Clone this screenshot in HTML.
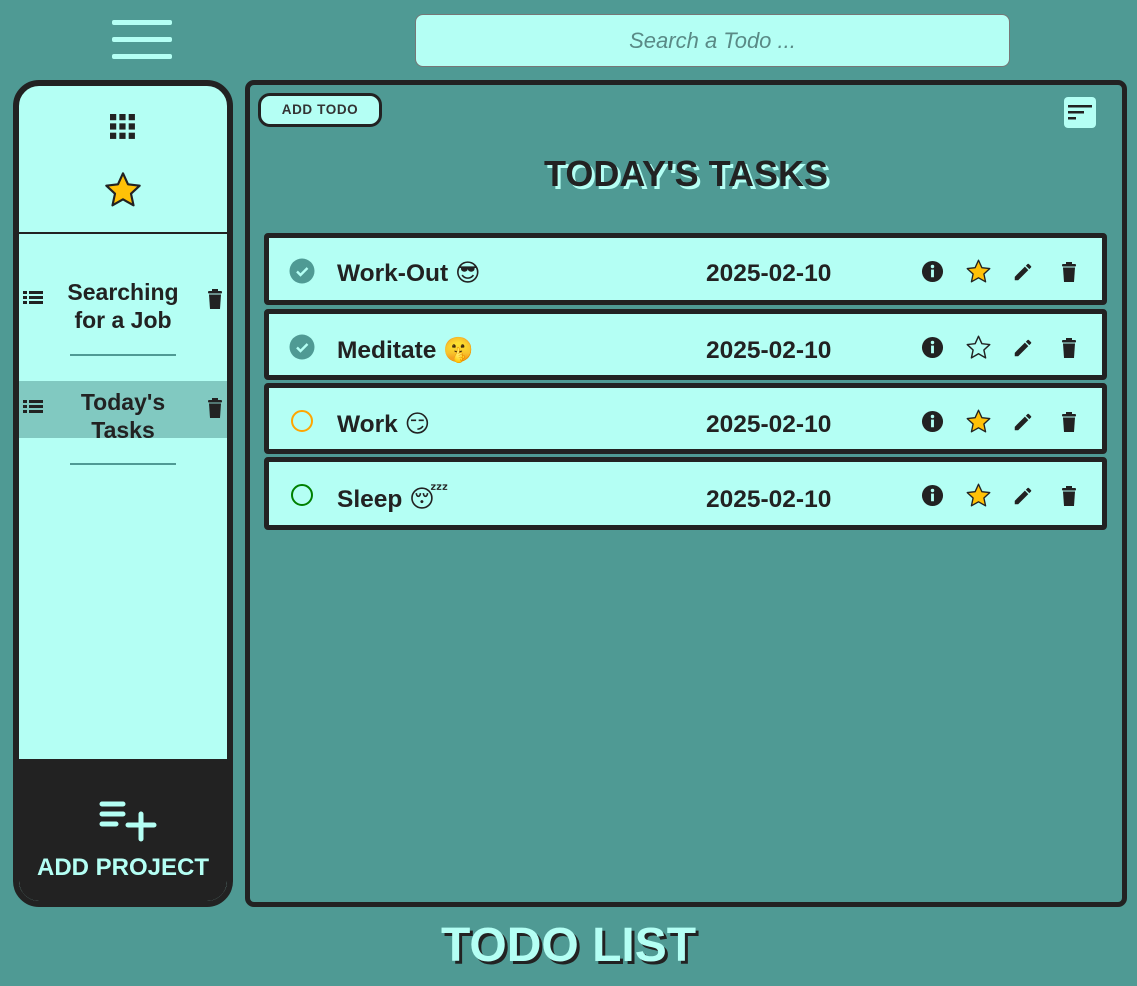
<!DOCTYPE html>
<html><head><meta charset="utf-8"><style>
*{box-sizing:border-box;margin:0;padding:0}
body{width:1137px;height:986px;background:#4f9a94;font-family:"Liberation Sans","DejaVu Sans",sans-serif;position:relative;overflow:hidden;color:#222}
.abs{position:absolute}
.ham div{position:absolute;left:112px;width:60px;height:5px;background:#b4fff4;border-radius:2px}
.search{left:415px;top:14px;width:595px;height:53px;background:#b4fff4;border:1.5px solid #777;border-radius:8px;font-style:italic;color:#5a8a86;font-size:22px;text-align:center;line-height:51px}
.side{left:13px;top:80px;width:220px;height:827px;border:6px solid #222;border-radius:26px;background:#b4fff4;overflow:hidden}
.main{left:245px;top:80px;width:882px;height:827px;border:5px solid #222;border-radius:9px}
.row{position:absolute;left:264px;width:843px;background:#b4fff4;border:5px solid #222;border-radius:4px}
.row .name{position:absolute;left:68px;font-size:24.5px;font-weight:bold}
.row .date{position:absolute;left:437px;font-size:24.5px;font-weight:bold}
.proj{position:absolute;left:0;width:208px;text-align:center;font-size:23px;font-weight:bold;line-height:28px}
</style></head><body>
<div class="ham"><div style="top:20px"></div><div style="top:37px"></div><div style="top:54px"></div></div>
<div class="abs search">Search a Todo ...</div>

<div class="abs side">
 <svg class="abs" style="left:91px;top:28px" width="27" height="27" viewBox="0 0 26 26" fill="#222">
  <rect x="0" y="0" width="6" height="6"/><rect x="9" y="0" width="6" height="6"/><rect x="18" y="0" width="6" height="6"/>
  <rect x="0" y="9" width="6" height="6"/><rect x="9" y="9" width="6" height="6"/><rect x="18" y="9" width="6" height="6"/>
  <rect x="0" y="18" width="6" height="6"/><rect x="9" y="18" width="6" height="6"/><rect x="18" y="18" width="6" height="6"/>
 </svg>
 <svg class="abs" style="left:84px;top:84px" width="40" height="40" viewBox="0 0 24 24"><path d="M12 2l3 6.6 7 .8-5.2 4.8 1.5 7L12 17.6 5.7 21.2l1.5-7L2 9.4l7-.8z" fill="#ffc107" stroke="#222" stroke-width="1.3" stroke-linejoin="round"/></svg>
 <div class="abs" style="left:0;top:146px;width:208px;height:2px;background:#222"></div>
 <svg class="abs" style="left:4px;top:204px" width="20" height="16" viewBox="0 0 20 16" fill="#222"><rect x="0" y="1" width="4" height="3"/><rect x="6" y="1" width="14" height="3"/><rect x="0" y="6" width="4" height="3"/><rect x="6" y="6" width="14" height="3"/><rect x="0" y="11" width="4" height="3"/><rect x="6" y="11" width="14" height="3"/></svg>
 <div class="proj" style="top:192px">Searching<br>for a Job</div>
 <svg class="abs" style="left:188px;top:202px" width="16" height="22" viewBox="0 0 16 22" fill="#222"><rect x="1" y="3" width="14" height="2.5" rx="1"/><rect x="5" y="1" width="6" height="3"/><path d="M2 6.5h12l-1 14.5H3z"/></svg>
 <div class="abs" style="left:51px;top:268px;width:106px;height:2px;background:#4f9a94"></div>
 <div class="abs" style="left:0;top:295px;width:208px;height:57px;background:#81c9c1"></div>
 <svg class="abs" style="left:4px;top:313px" width="20" height="16" viewBox="0 0 20 16" fill="#222"><rect x="0" y="1" width="4" height="3"/><rect x="6" y="1" width="14" height="3"/><rect x="0" y="6" width="4" height="3"/><rect x="6" y="6" width="14" height="3"/><rect x="0" y="11" width="4" height="3"/><rect x="6" y="11" width="14" height="3"/></svg>
 <div class="proj" style="top:302px">Today's<br>Tasks</div>
 <svg class="abs" style="left:188px;top:311px" width="16" height="22" viewBox="0 0 16 22" fill="#222"><rect x="1" y="3" width="14" height="2.5" rx="1"/><rect x="5" y="1" width="6" height="3"/><path d="M2 6.5h12l-1 14.5H3z"/></svg>
 <div class="abs" style="left:51px;top:377px;width:106px;height:2px;background:#4f9a94"></div>
 <div class="abs" style="left:0;top:673px;width:208px;height:150px;background:#222"></div>
 <svg class="abs" style="left:80px;top:714px" width="60" height="42" viewBox="0 0 60 42" stroke="#b4fff4" stroke-width="5" stroke-linecap="round"><path d="M3 4h21M3 14h21M3 24h14M29 25h26M42 14v25"/></svg>
 <div class="abs" style="left:0;top:768px;width:208px;text-align:center;color:#b4fff4;font-weight:bold;font-size:24px">ADD PROJECT</div>
</div>

<div class="abs main"></div>
<div class="abs" style="left:258px;top:93px;width:124px;height:34px;border:3px solid #222;border-radius:12px;background:#b4fff4;font-size:13.5px;letter-spacing:0.6px;font-weight:bold;text-align:center;line-height:28px;color:#333">ADD TODO</div>
<div class="abs" style="left:1064px;top:97px;width:32px;height:31px;background:#b4fff4;border-radius:4px">
 <svg width="32" height="31" viewBox="0 0 32 31" fill="#222"><rect x="4" y="8" width="24" height="2.5"/><rect x="4" y="14" width="16" height="2.5"/><rect x="4" y="20" width="8" height="2.5"/></svg></div>
<div class="abs" style="left:400px;top:153px;width:572px;text-align:center;font-size:36px;font-weight:bold;text-shadow:3px 3px 0 #b4fff4">TODAY'S TASKS</div>

<div class="row" style="top:233px;height:72px">
 <svg class="abs" style="left:20px;top:20px" width="26" height="26" viewBox="0 0 26 26"><circle cx="13" cy="13" r="12.5" fill="#4f9a94"/><path d="M8 13.5l3.5 3.5 7-7" stroke="#b4fff4" stroke-width="2.4" fill="none"/></svg>
 <div class="name" style="top:20px">Work-Out 😎</div><div class="date" style="top:22px">2025-02-10</div>
 <svg class="abs" style="left:652px;top:22px" width="23" height="23" viewBox="0 0 24 24"><circle cx="12" cy="12" r="11" fill="#222"/><rect x="10.5" y="10" width="3" height="8" fill="#b4fff4"/><circle cx="12" cy="6.8" r="1.8" fill="#b4fff4"/></svg>
 <svg class="abs" style="left:696px;top:20px" width="27" height="27" viewBox="0 0 24 24"><path d="M12 2l3 6.6 7 .8-5.2 4.8 1.5 7L12 17.6 5.7 21.2l1.5-7L2 9.4l7-.8z" fill="#ffc107" stroke="#222" stroke-width="1.2" stroke-linejoin="round"/></svg>
 <svg class="abs" style="left:743px;top:23px" width="22" height="22" viewBox="0 0 24 24" fill="#222"><path d="M3 17.25V21h3.75L17.8 9.94l-3.75-3.75zM20.7 7.04a1 1 0 000-1.41l-2.34-2.34a1 1 0 00-1.41 0l-1.83 1.83 3.75 3.75z"/></svg>
 <svg class="abs" style="left:792px;top:23px" width="16" height="22" viewBox="0 0 16 22" fill="#222"><rect x="1" y="3" width="14" height="2.5" rx="1"/><rect x="5" y="1" width="6" height="3"/><path d="M2 6.5h12l-1 14.5H3z"/></svg>
</div>
<div class="row" style="top:309px;height:71px">
 <svg class="abs" style="left:20px;top:20px" width="26" height="26" viewBox="0 0 26 26"><circle cx="13" cy="13" r="12.5" fill="#4f9a94"/><path d="M8 13.5l3.5 3.5 7-7" stroke="#b4fff4" stroke-width="2.4" fill="none"/></svg>
 <div class="name" style="top:21px">Meditate 🤫</div><div class="date" style="top:23px">2025-02-10</div>
 <svg class="abs" style="left:652px;top:22px" width="23" height="23" viewBox="0 0 24 24"><circle cx="12" cy="12" r="11" fill="#222"/><rect x="10.5" y="10" width="3" height="8" fill="#b4fff4"/><circle cx="12" cy="6.8" r="1.8" fill="#b4fff4"/></svg>
 <svg class="abs" style="left:696px;top:20px" width="27" height="27" viewBox="0 0 24 24"><path d="M12 2l3 6.6 7 .8-5.2 4.8 1.5 7L12 17.6 5.7 21.2l1.5-7L2 9.4l7-.8z" fill="none" stroke="#222" stroke-width="1.3" stroke-linejoin="round"/></svg>
 <svg class="abs" style="left:743px;top:23px" width="22" height="22" viewBox="0 0 24 24" fill="#222"><path d="M3 17.25V21h3.75L17.8 9.94l-3.75-3.75zM20.7 7.04a1 1 0 000-1.41l-2.34-2.34a1 1 0 00-1.41 0l-1.83 1.83 3.75 3.75z"/></svg>
 <svg class="abs" style="left:792px;top:23px" width="16" height="22" viewBox="0 0 16 22" fill="#222"><rect x="1" y="3" width="14" height="2.5" rx="1"/><rect x="5" y="1" width="6" height="3"/><path d="M2 6.5h12l-1 14.5H3z"/></svg>
</div>
<div class="row" style="top:383px;height:71px">
 <svg class="abs" style="left:21px;top:21px" width="24" height="24" viewBox="0 0 24 24"><circle cx="12" cy="12" r="10" fill="none" stroke="#ffa500" stroke-width="2"/></svg>
 <div class="name" style="top:21px">Work 😏</div><div class="date" style="top:23px">2025-02-10</div>
 <svg class="abs" style="left:652px;top:22px" width="23" height="23" viewBox="0 0 24 24"><circle cx="12" cy="12" r="11" fill="#222"/><rect x="10.5" y="10" width="3" height="8" fill="#b4fff4"/><circle cx="12" cy="6.8" r="1.8" fill="#b4fff4"/></svg>
 <svg class="abs" style="left:696px;top:20px" width="27" height="27" viewBox="0 0 24 24"><path d="M12 2l3 6.6 7 .8-5.2 4.8 1.5 7L12 17.6 5.7 21.2l1.5-7L2 9.4l7-.8z" fill="#ffc107" stroke="#222" stroke-width="1.2" stroke-linejoin="round"/></svg>
 <svg class="abs" style="left:743px;top:23px" width="22" height="22" viewBox="0 0 24 24" fill="#222"><path d="M3 17.25V21h3.75L17.8 9.94l-3.75-3.75zM20.7 7.04a1 1 0 000-1.41l-2.34-2.34a1 1 0 00-1.41 0l-1.83 1.83 3.75 3.75z"/></svg>
 <svg class="abs" style="left:792px;top:23px" width="16" height="22" viewBox="0 0 16 22" fill="#222"><rect x="1" y="3" width="14" height="2.5" rx="1"/><rect x="5" y="1" width="6" height="3"/><path d="M2 6.5h12l-1 14.5H3z"/></svg>
</div>
<div class="row" style="top:457px;height:73px">
 <svg class="abs" style="left:21px;top:21px" width="24" height="24" viewBox="0 0 24 24"><circle cx="12" cy="12" r="10" fill="none" stroke="#008000" stroke-width="2"/></svg>
 <div class="name" style="top:22px">Sleep 😴</div><div class="date" style="top:24px">2025-02-10</div>
 <svg class="abs" style="left:652px;top:22px" width="23" height="23" viewBox="0 0 24 24"><circle cx="12" cy="12" r="11" fill="#222"/><rect x="10.5" y="10" width="3" height="8" fill="#b4fff4"/><circle cx="12" cy="6.8" r="1.8" fill="#b4fff4"/></svg>
 <svg class="abs" style="left:696px;top:20px" width="27" height="27" viewBox="0 0 24 24"><path d="M12 2l3 6.6 7 .8-5.2 4.8 1.5 7L12 17.6 5.7 21.2l1.5-7L2 9.4l7-.8z" fill="#ffc107" stroke="#222" stroke-width="1.2" stroke-linejoin="round"/></svg>
 <svg class="abs" style="left:743px;top:23px" width="22" height="22" viewBox="0 0 24 24" fill="#222"><path d="M3 17.25V21h3.75L17.8 9.94l-3.75-3.75zM20.7 7.04a1 1 0 000-1.41l-2.34-2.34a1 1 0 00-1.41 0l-1.83 1.83 3.75 3.75z"/></svg>
 <svg class="abs" style="left:792px;top:23px" width="16" height="22" viewBox="0 0 16 22" fill="#222"><rect x="1" y="3" width="14" height="2.5" rx="1"/><rect x="5" y="1" width="6" height="3"/><path d="M2 6.5h12l-1 14.5H3z"/></svg>
</div>

<div class="abs" style="left:300px;top:918px;width:537px;text-align:center;font-size:48px;font-weight:bold;color:#b4fff4;text-shadow:3px 3px 0 #222">TODO LIST</div>
</body></html>
